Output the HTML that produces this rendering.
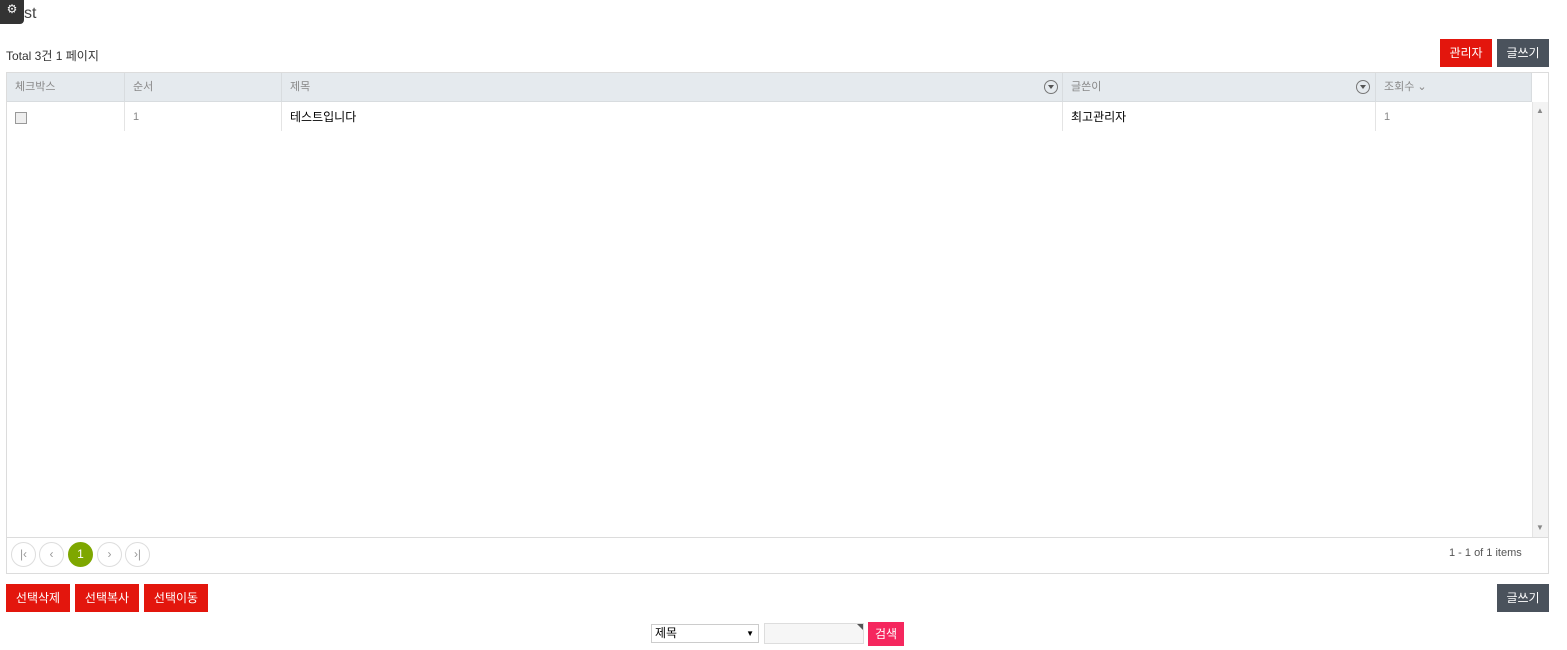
<!DOCTYPE html>
<html><head><meta charset="utf-8"><style>
*{box-sizing:border-box;margin:0;padding:0}
body{width:1567px;height:650px;background:#fff;font-family:"Liberation Sans","Noto Sans CJK KR",sans-serif;font-size:12px;color:#333;position:relative;overflow:hidden}
.a{position:absolute}
.btn{position:absolute;color:#fff;font-size:12px;text-align:center;line-height:28px;height:28px}
.red{background:#e3160d}.gray{background:#4a525c}
.hd{position:absolute;top:73px;height:29px;line-height:29px;color:#888;font-size:11px;border-right:1px solid #d8dcdf;padding-left:8px}
.cell{position:absolute;top:102px;height:29px;line-height:31px;border-right:1px solid #e4e4e4;padding-left:8px;font-size:12px}
.pg{position:absolute;top:542px;width:25px;height:25px;border:1px solid #ddd;border-radius:50%;text-align:center;line-height:23px;color:#999;font-size:12px}
.flt{position:absolute;top:80px;width:14px;height:14px;border:1px solid #777;border-radius:50%}
.flt:after{content:"";position:absolute;left:3px;top:4px;border-left:3px solid transparent;border-right:3px solid transparent;border-top:4px solid #555}
</style></head><body>
<div class="a" style="left:0;top:0;width:24px;height:24px;background:#333;border-radius:0 0 4px 0;color:#fff;font-size:12px;line-height:18px;text-align:center">⚙</div>
<div class="a" style="left:24px;top:5px;font-size:16px;color:#444">st</div>
<div class="a" style="left:6px;top:47px;font-size:12px;color:#333">Total 3건 1 페이지</div>
<div class="btn red" style="left:1440px;top:39px;width:52px">관리자</div>
<div class="btn gray" style="left:1497px;top:39px;width:52px">글쓰기</div>
<div class="a" style="left:6px;top:72px;width:1543px;height:502px;border:1px solid #dcdcdc"></div>
<div class="a" style="left:7px;top:73px;width:1524px;height:29px;background:#e5eaee;border-bottom:1px solid #d8dcdf"></div>
<div class="hd" style="left:7px;width:118px">체크박스</div>
<div class="hd" style="left:125px;width:157px">순서</div>
<div class="hd" style="left:282px;width:781px">제목</div>
<div class="hd" style="left:1063px;width:313px">글쓴이</div>
<div class="hd" style="left:1376px;width:156px">조회수 ⌄</div>
<div class="flt" style="left:1044px"></div>
<div class="flt" style="left:1356px"></div>
<div class="cell" style="left:7px;width:118px"><span style="display:inline-block;width:12px;height:12px;border:1px solid #999;background:#eee;vertical-align:middle"></span></div>
<div class="cell" style="left:125px;width:157px;color:#888;font-size:11px">1</div>
<div class="cell" style="left:282px;width:781px;color:#000">테스트입니다</div>
<div class="cell" style="left:1063px;width:313px;color:#000">최고관리자</div>
<div class="cell" style="left:1376px;width:156px;color:#888;font-size:11px;border-right:none">1</div>
<div class="a" style="left:1532px;top:102px;width:16px;height:435px;background:#f3f3f3;border-left:1px solid #e4e4e4"></div>
<div class="a" style="left:1536px;top:106px;font-size:8px;color:#888">▲</div>
<div class="a" style="left:1536px;top:523px;font-size:8px;color:#888">▼</div>
<div class="a" style="left:7px;top:537px;width:1541px;height:1px;background:#dcdcdc"></div>
<div class="pg" style="left:11px">|‹</div>
<div class="pg" style="left:39px">‹</div>
<div class="pg" style="left:68px;background:#7ea700;border-color:#7ea700;color:#fff">1</div>
<div class="pg" style="left:97px">›</div>
<div class="pg" style="left:125px">›|</div>
<div class="a" style="left:1449px;top:547px;color:#555;font-size:11px">1 - 1 of 1 items</div>
<div class="btn red" style="left:6px;top:584px;width:64px">선택삭제</div>
<div class="btn red" style="left:75px;top:584px;width:64px">선택복사</div>
<div class="btn red" style="left:144px;top:584px;width:64px">선택이동</div>
<div class="btn gray" style="left:1497px;top:584px;width:52px">글쓰기</div>
<div class="a" style="left:651px;top:624px;width:108px;height:19px;border:1px solid #ccc;font-size:12px;line-height:17px;padding-left:3px;color:#000">제목<span style="position:absolute;right:4px;top:0;font-size:8px">▼</span></div>
<div class="a" style="left:764px;top:623px;width:100px;height:21px;border:1px solid #ddd;background:#f6f6f6"></div>
<div class="a" style="left:857px;top:624px;border-left:6px solid transparent;border-top:6px solid #555"></div>
<div class="btn" style="left:868px;top:622px;width:36px;height:24px;line-height:24px;background:#f5275e">검색</div>
</body></html>
